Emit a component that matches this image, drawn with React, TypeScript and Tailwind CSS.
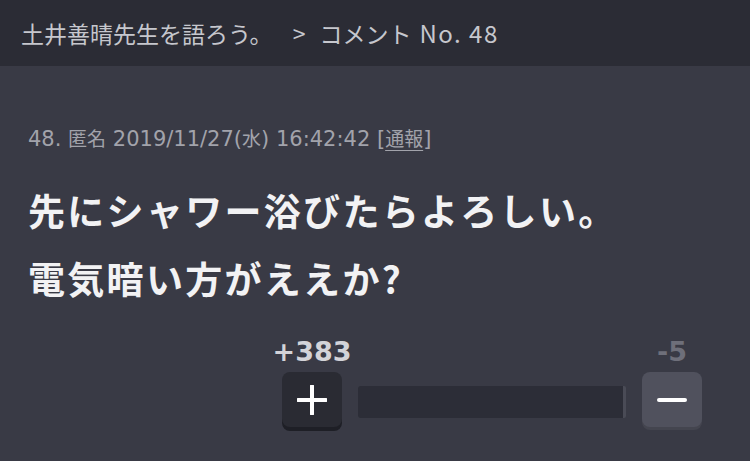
const post = {
  thread: '土井善晴先生を語ろう。',
  no: 48,
  name: '匿名',
  date: '2019/11/27',
  day: '水',
  time: '16:42:42',
  lines: ['先にシャワー浴びたらよろしい。', '電気暗い方がええか?'],
  plus: 383,
  minus: 5,
}

export default function App() {
  const total = post.plus + post.minus
  const plusPct = (post.plus / total) * 100

  return (
    <div className="min-h-[461px] bg-[#393a45] font-['Noto_Sans_CJK_JP',sans-serif]">
      <header className="h-[66px] bg-[#2b2c35] flex items-center px-[21px] text-[23px] text-[#c6c7cd] whitespace-nowrap">
        <span>{post.thread}</span>
        <span className="ml-[20px]">&gt;</span>
        <span className="ml-[14px]">コメント</span>
        <span className="ml-[8px] text-[24px] tracking-[1.5px]">No. {post.no}</span>
      </header>

      <main className="px-[28px] pt-[58px]">
        <p className="text-[21px] text-[#a2a3ab] font-['DejaVu_Sans','Noto_Sans_CJK_JP',sans-serif] leading-[30px] whitespace-nowrap">
          {post.no}. <span className="text-[19px]">{post.name}</span> {post.date}(
          <span className="text-[19px]">{post.day}</span>) {post.time} [
          <span className="text-[19px] underline underline-offset-4 decoration-1">通報</span>]
        </p>

        <div className="mt-[22px] text-[37px] font-bold text-[#f2f2f4] leading-[68px] tracking-[2.3px] whitespace-nowrap">
          {post.lines.map((line) => (
            <p key={line}>{line}</p>
          ))}
        </div>

        <div className="mt-[24px] flex justify-end pr-[20px] gap-[16px]">
          <div className="flex flex-col items-center w-[60px]">
            <span className="text-[27px] font-bold text-[#d3d3d8] leading-[32px] font-['DejaVu_Sans',sans-serif] whitespace-nowrap">
              +{post.plus}
            </span>
            <button className="mt-[4px] w-[60px] h-[55px] rounded-[8px] bg-[#2a2b33] shadow-[0_4px_0_#1e1f26] flex items-center justify-center">
              <svg width="30" height="30" viewBox="0 0 30 30">
                <path d="M15 1v28M1 15h28" stroke="#fff" strokeWidth="4" strokeLinecap="round" />
              </svg>
            </button>
          </div>

          <div className="w-[268px] pt-[50px]">
            <div className="h-[32px] flex rounded-[2px] overflow-hidden bg-[#4a4b56]">
              <div className="h-full bg-[#2c2d37]" style={{ width: `${plusPct}%` }} />
            </div>
          </div>

          <div className="flex flex-col items-center w-[60px]">
            <span className="text-[27px] font-bold text-[#6e6f7a] leading-[32px] font-['DejaVu_Sans',sans-serif]">
              -{post.minus}
            </span>
            <button className="mt-[4px] w-[60px] h-[55px] rounded-[8px] bg-[#50515d] shadow-[0_3px_0_#44454f] flex items-center justify-center">
              <svg width="30" height="6" viewBox="0 0 30 6">
                <path d="M2 3h26" stroke="#fff" strokeWidth="4" strokeLinecap="round" />
              </svg>
            </button>
          </div>
        </div>
      </main>
    </div>
  )
}
